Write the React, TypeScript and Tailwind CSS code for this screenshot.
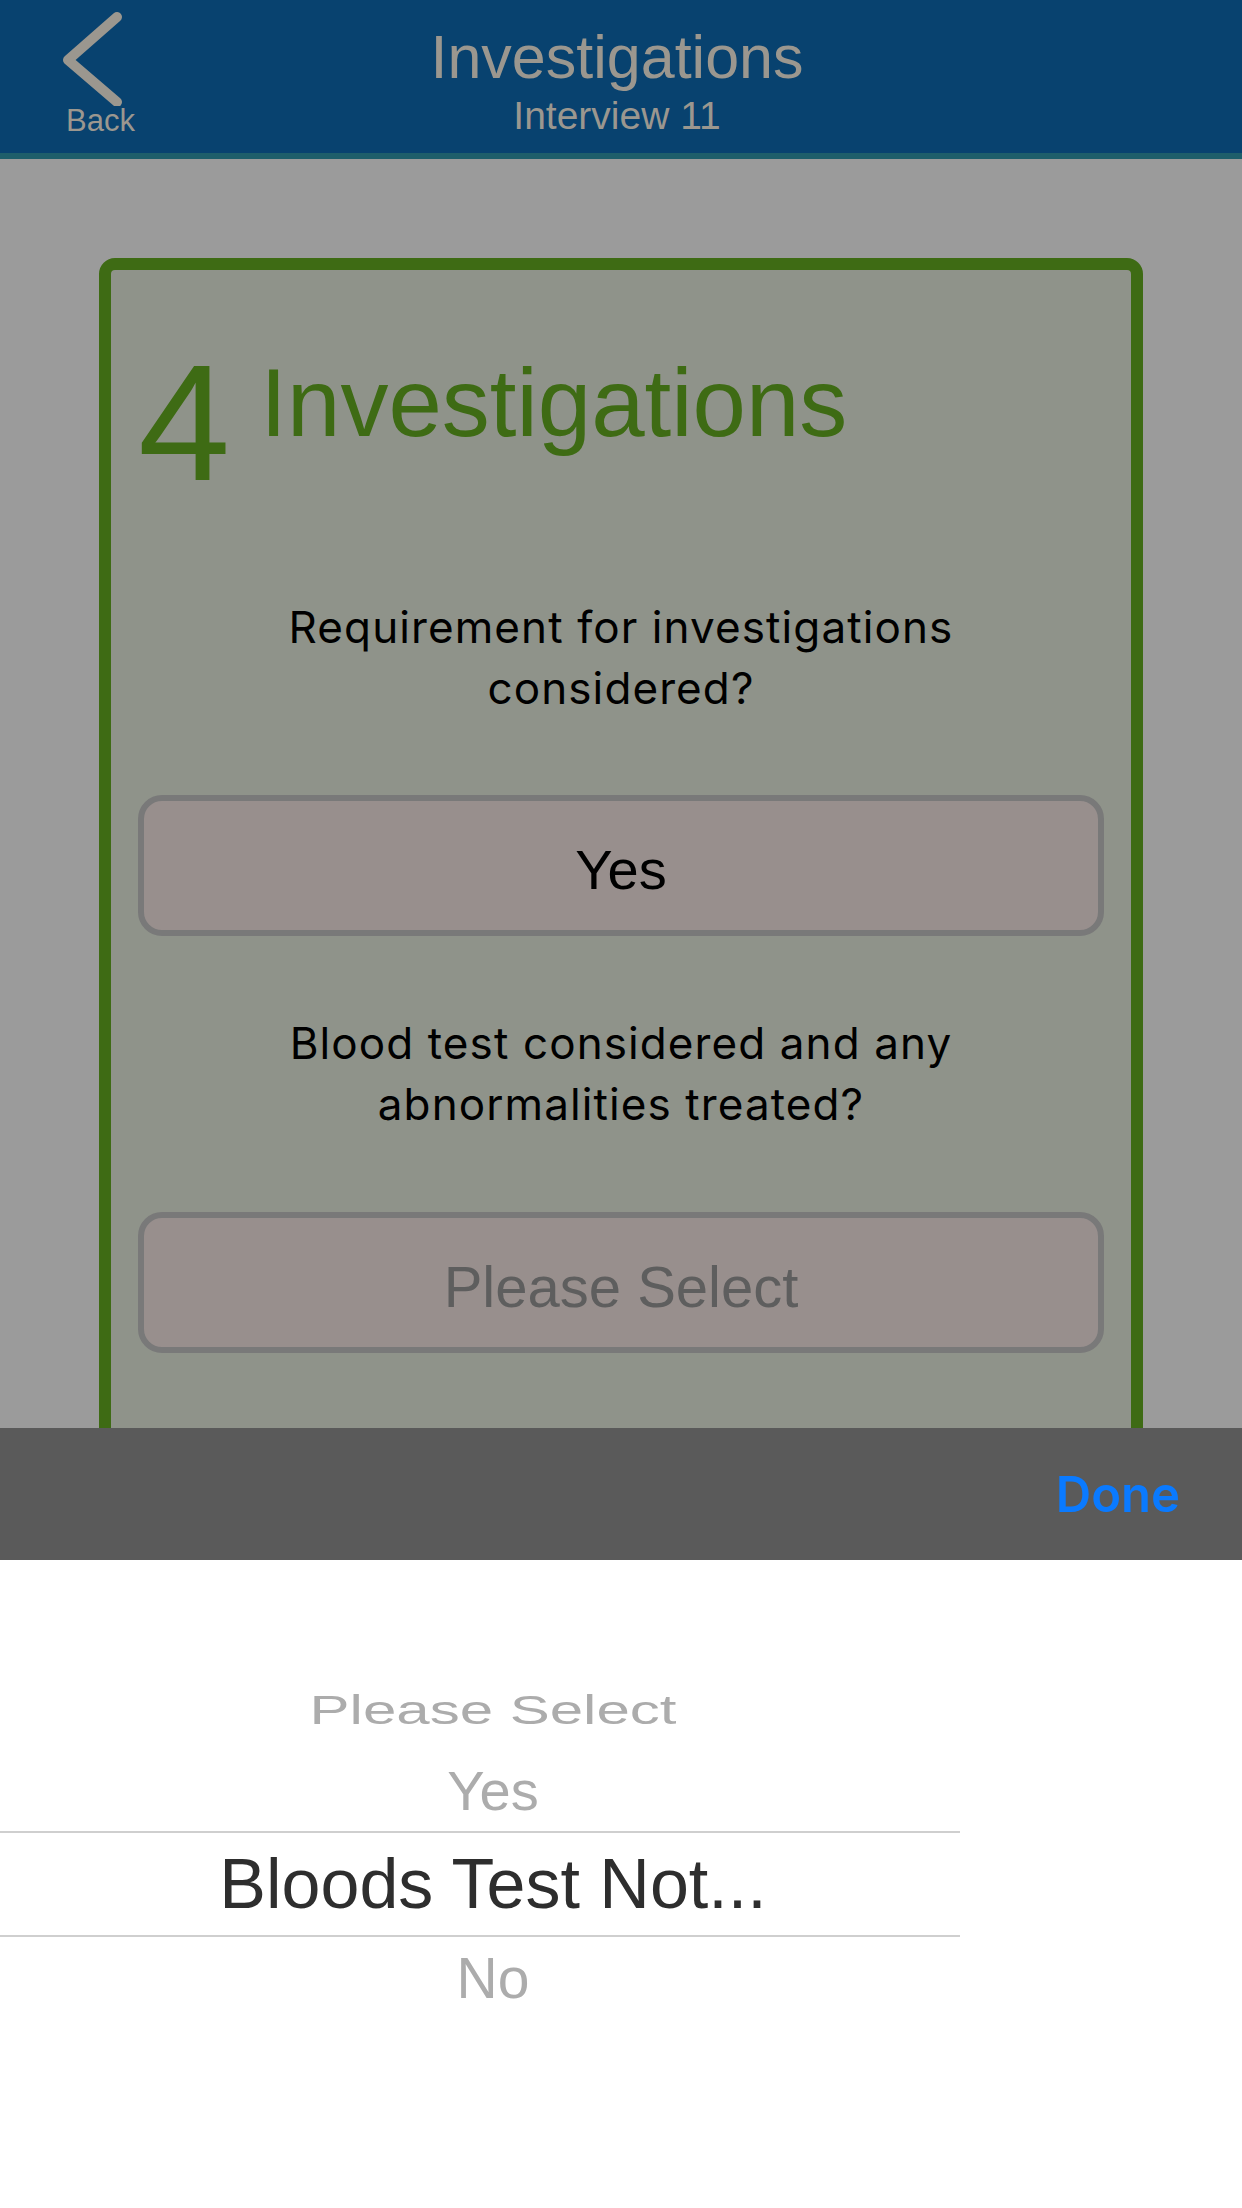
export default function App() {
  return (
    <div className="w-[1242px] h-[2208px] flex flex-col overflow-hidden bg-[#9b9b9b] font-['Liberation_Sans',Arial,sans-serif]">
      {/* Header */}
      <div className="h-[159px] shrink-0 bg-[#08426f] border-b-[6px] border-[#1e5e6a] grid grid-cols-[1fr_auto_1fr] text-[#9b978f]">
        <div className="flex flex-col items-start pl-[62px] pt-[10px]">
          <svg width="60" height="96" viewBox="0 0 60 96" fill="none">
            <polyline
              points="55,7 6,50 55,92"
              stroke="#9b978f"
              strokeWidth="10"
              strokeLinecap="round"
              strokeLinejoin="round"
            />
          </svg>
          <span className="ml-[4px] text-[31px] leading-[30px]">Back</span>
        </div>
        <div className="flex flex-col items-center pt-[27px] pr-[8px]">
          <div className="text-[61px] leading-[61px]">Investigations</div>
          <div className="mt-[8px] text-[39px] leading-[39px]">Interview 11</div>
        </div>
        <div />
      </div>

      {/* Content */}
      <div className="h-[1269px] shrink-0 overflow-hidden px-[99px] pt-[99px]">
        <div className="border-[12px] border-[#3e6b14] rounded-[16px] bg-[#8f938a] px-[27px] pt-[70px] pb-[200px]">
          <div className="flex items-start text-[#3e6b14]">
            <span className="text-[166px] leading-[166px]">4</span>
            <span className="ml-[30px] mt-[15px] text-[96px] leading-[95px]">Investigations</span>
          </div>
          <div className="mt-[91px] text-center font-['Inter',sans-serif] text-[44px] leading-[61px] tracking-[1.1px] text-black">
            Requirement for investigations
            <br />
            considered?
          </div>
          <div className="mt-[76px] h-[141px] border-[6px] border-[#797979] rounded-[24px] bg-[#988f8d] flex items-center justify-center pt-[9px] text-[56px] leading-[56px] text-black">
            Yes
          </div>
          <div className="mt-[77px] text-center font-['Inter',sans-serif] text-[44px] leading-[61px] tracking-[1.1px] text-black">
            Blood test considered and any
            <br />
            abnormalities treated?
          </div>
          <div className="mt-[77px] h-[141px] border-[6px] border-[#797979] rounded-[24px] bg-[#988f8d] flex items-center justify-center pt-[9px] text-[58px] leading-[58px] text-[#5e5e5e]">
            Please Select
          </div>
        </div>
      </div>

      {/* Toolbar */}
      <div className="h-[132px] shrink-0 bg-[#5a5a5a] flex items-center justify-end pr-[62px]">
        <span className="font-['Inter',sans-serif] font-semibold text-[49px] leading-none text-[#0a7aff]">Done</span>
      </div>

      {/* Picker */}
      <div className="flex-1 bg-white">
        <div className="w-[960px] flex flex-col">
          <div className="mt-[120px] h-[60px] pl-[26px] text-center text-[60px] leading-[60px] text-[#acacac] scale-y-[0.68]">
            Please Select
          </div>
          <div className="mt-[23px] h-[56px] pl-[26px] text-center text-[56px] leading-[56px] text-[#acacac]">
            Yes
          </div>
          <div className="mt-[12px] h-[106px] border-y-2 border-[#cfcfcf] pl-[26px] text-center text-[70px] leading-[102px] text-[#2e2e2e]">
            Bloods Test Not...
          </div>
          <div className="mt-[13px] h-[57px] pl-[26px] text-center text-[57px] leading-[57px] text-[#acacac]">
            No
          </div>
        </div>
      </div>
    </div>
  );
}
